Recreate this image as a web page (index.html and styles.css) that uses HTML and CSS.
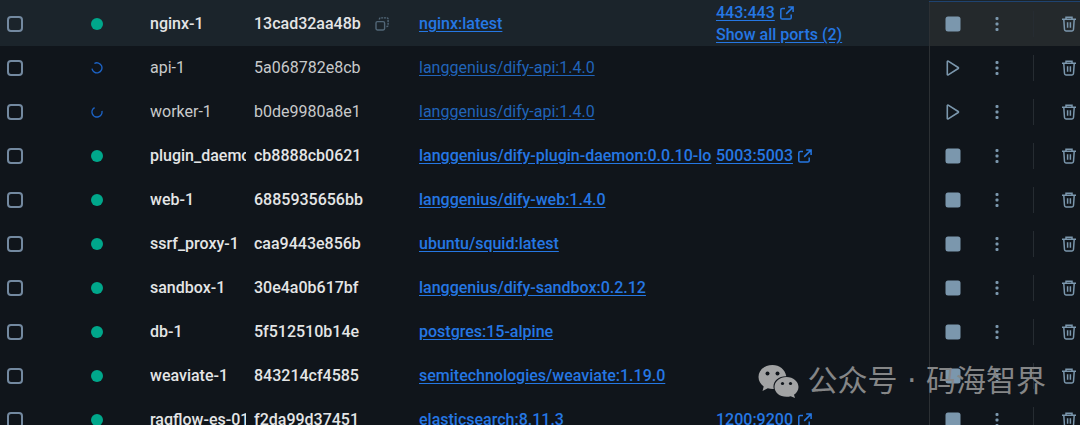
FILE: index.html
```html
<!DOCTYPE html>
<html lang="en">
<head>
    <meta charset="UTF-8">
    <title>Containers</title>
    <meta name="viewport" content="width=device-width, initial-scale=1">
    <link rel="stylesheet" href="styles.css">
</head>
<body>
<svg class="sprite" aria-hidden="true">
    <symbol id="icon-stop" viewBox="0 0 16 16">
        <rect x="0.5" y="0.5" width="15" height="15" rx="2.5" fill="currentColor"/>
    </symbol>
    <symbol id="icon-play" viewBox="0 0 16 16">
        <path d="M2.3 1.6v12.8a.6.6 0 0 0 .9.5l10-6.4a.6.6 0 0 0 0-1l-10-6.4a.6.6 0 0 0-.9.5z" fill="none" stroke="currentColor" stroke-width="1.6"/>
    </symbol>
    <symbol id="icon-more" viewBox="0 0 16 16">
        <rect x="6.5" y="1" width="3" height="3" rx="1" fill="currentColor"/>
        <rect x="6.5" y="6.5" width="3" height="3" rx="1" fill="currentColor"/>
        <rect x="6.5" y="12" width="3" height="3" rx="1" fill="currentColor"/>
    </symbol>
    <symbol id="icon-trash" viewBox="0 0 16 16">
        <path d="M1 3.2h14M5 3V1.2h6V3M2.800 3.500l.7 10a1.500 1.500 0 0 0 1.500 1.400h6a1.500 1.500 0 0 0 1.500-1.400l.7-10M6.600 6.300v5.400M9.400 6.300v5.400" fill="none" stroke="currentColor" stroke-width="1.5"/>
    </symbol>
    <symbol id="icon-open" viewBox="0 0 14 14">
        <path d="M5 2.5H2.2A1.4 1.4 0 0 0 .8 3.9v7.800a1.400 1.400 0 0 0 1.400 1.400h7.600a1.400 1.400 0 0 0 1.400-1.400V8.500M8.200 1h4.900v4.900M13 1.100L6.200 7.900" fill="none" stroke="currentColor" stroke-width="1.5"/>
    </symbol>
    <symbol id="icon-copy" viewBox="0 0 14 14">
        <rect x="1" y="4.6" width="8.6" height="8.4" rx="1.4" fill="none" stroke="currentColor" stroke-width="1.4"/>
        <path d="M4.4 2.6V2A1.2 1.2 0 0 1 5.6.9H12A1.2 1.2 0 0 1 13.1 2v6.2A1.2 1.2 0 0 1 12 9.5h-.6" fill="none" stroke="currentColor" stroke-width="1.4" stroke-dasharray="2 .8"/>
    </symbol>
    <symbol id="icon-loading" viewBox="0 0 12 12">
        <path d="M3.4 1.5A5 5 0 1 1 1 6.7" fill="none" stroke="currentColor" stroke-width="1.4"/>
    </symbol>
    <symbol id="icon-loading-alt" viewBox="0 0 12 12">
        <path d="M10.9 5A5 5 0 1 1 3.6 1.6" fill="none" stroke="currentColor" stroke-width="1.4"/>
    </symbol>
</svg>
<main class="container-list">
    <table>
        <colgroup>
            <col class="col-check">
            <col class="col-status">
            <col class="col-name">
            <col class="col-id">
            <col class="col-image">
            <col class="col-ports">
            <col class="col-actions">
        </colgroup>
        <tbody>
        <tr class="active">
            <td><input type="checkbox" aria-label="Select nginx-1"></td>
            <td><span class="dot"></span></td>
            <td><div class="name">nginx-1</div></td>
            <td><div class="id">13cad32aa48b <button class="copy" aria-label="Copy ID"><svg><use href="#icon-copy"/></svg></button></div></td>
            <td><a href="#">nginx:latest</a></td>
            <td class="ports"><a href="#">443:443</a><svg><use href="#icon-open"/></svg><br><a href="#">Show all ports (2)</a></td>
            <td class="actions"><div><button aria-label="Stop"><svg><use href="#icon-stop"/></svg></button><button aria-label="More"><svg><use href="#icon-more"/></svg></button><button class="delete" aria-label="Delete"><svg><use href="#icon-trash"/></svg></button></div></td>
        </tr>
        <tr class="starting">
            <td><input type="checkbox" aria-label="Select api-1"></td>
            <td><svg class="loading"><use href="#icon-loading"/></svg></td>
            <td><div class="name">api-1</div></td>
            <td><div class="id">5a068782e8cb</div></td>
            <td><a href="#">langgenius/dify-api:1.4.0</a></td>
            <td class="ports"></td>
            <td class="actions"><div><button aria-label="Start"><svg><use href="#icon-play"/></svg></button><button aria-label="More"><svg><use href="#icon-more"/></svg></button><button class="delete" aria-label="Delete"><svg><use href="#icon-trash"/></svg></button></div></td>
        </tr>
        <tr class="starting">
            <td><input type="checkbox" aria-label="Select worker-1"></td>
            <td><svg class="loading"><use href="#icon-loading-alt"/></svg></td>
            <td><div class="name">worker-1</div></td>
            <td><div class="id">b0de9980a8e1</div></td>
            <td><a href="#">langgenius/dify-api:1.4.0</a></td>
            <td class="ports"></td>
            <td class="actions"><div><button aria-label="Start"><svg><use href="#icon-play"/></svg></button><button aria-label="More"><svg><use href="#icon-more"/></svg></button><button class="delete" aria-label="Delete"><svg><use href="#icon-trash"/></svg></button></div></td>
        </tr>
        <tr>
            <td><input type="checkbox" aria-label="Select plugin_daemon"></td>
            <td><span class="dot"></span></td>
            <td><div class="name">plugin_daemo</div></td>
            <td><div class="id">cb8888cb0621</div></td>
            <td><a href="#">langgenius/dify-plugin-daemon:0.0.10-lo</a></td>
            <td class="ports"><a href="#">5003:5003</a><svg><use href="#icon-open"/></svg></td>
            <td class="actions"><div><button aria-label="Stop"><svg><use href="#icon-stop"/></svg></button><button aria-label="More"><svg><use href="#icon-more"/></svg></button><button class="delete" aria-label="Delete"><svg><use href="#icon-trash"/></svg></button></div></td>
        </tr>
        <tr>
            <td><input type="checkbox" aria-label="Select web-1"></td>
            <td><span class="dot"></span></td>
            <td><div class="name">web-1</div></td>
            <td><div class="id">6885935656bb</div></td>
            <td><a href="#">langgenius/dify-web:1.4.0</a></td>
            <td class="ports"></td>
            <td class="actions"><div><button aria-label="Stop"><svg><use href="#icon-stop"/></svg></button><button aria-label="More"><svg><use href="#icon-more"/></svg></button><button class="delete" aria-label="Delete"><svg><use href="#icon-trash"/></svg></button></div></td>
        </tr>
        <tr>
            <td><input type="checkbox" aria-label="Select ssrf_proxy-1"></td>
            <td><span class="dot"></span></td>
            <td><div class="name">ssrf_proxy-1</div></td>
            <td><div class="id">caa9443e856b</div></td>
            <td><a href="#">ubuntu/squid:latest</a></td>
            <td class="ports"></td>
            <td class="actions"><div><button aria-label="Stop"><svg><use href="#icon-stop"/></svg></button><button aria-label="More"><svg><use href="#icon-more"/></svg></button><button class="delete" aria-label="Delete"><svg><use href="#icon-trash"/></svg></button></div></td>
        </tr>
        <tr>
            <td><input type="checkbox" aria-label="Select sandbox-1"></td>
            <td><span class="dot"></span></td>
            <td><div class="name">sandbox-1</div></td>
            <td><div class="id">30e4a0b617bf</div></td>
            <td><a href="#">langgenius/dify-sandbox:0.2.12</a></td>
            <td class="ports"></td>
            <td class="actions"><div><button aria-label="Stop"><svg><use href="#icon-stop"/></svg></button><button aria-label="More"><svg><use href="#icon-more"/></svg></button><button class="delete" aria-label="Delete"><svg><use href="#icon-trash"/></svg></button></div></td>
        </tr>
        <tr>
            <td><input type="checkbox" aria-label="Select db-1"></td>
            <td><span class="dot"></span></td>
            <td><div class="name">db-1</div></td>
            <td><div class="id">5f512510b14e</div></td>
            <td><a href="#">postgres:15-alpine</a></td>
            <td class="ports"></td>
            <td class="actions"><div><button aria-label="Stop"><svg><use href="#icon-stop"/></svg></button><button aria-label="More"><svg><use href="#icon-more"/></svg></button><button class="delete" aria-label="Delete"><svg><use href="#icon-trash"/></svg></button></div></td>
        </tr>
        <tr>
            <td><input type="checkbox" aria-label="Select weaviate-1"></td>
            <td><span class="dot"></span></td>
            <td><div class="name">weaviate-1</div></td>
            <td><div class="id">843214cf4585</div></td>
            <td><a href="#">semitechnologies/weaviate:1.19.0</a></td>
            <td class="ports"></td>
            <td class="actions"><div><button aria-label="Stop"><svg><use href="#icon-stop"/></svg></button><button aria-label="More"><svg><use href="#icon-more"/></svg></button><button class="delete" aria-label="Delete"><svg><use href="#icon-trash"/></svg></button></div></td>
        </tr>
        <tr>
            <td><input type="checkbox" aria-label="Select ragflow-es-01"></td>
            <td><span class="dot"></span></td>
            <td><div class="name">ragflow-es-01</div></td>
            <td><div class="id">f2da99d37451</div></td>
            <td><a href="#">elasticsearch:8.11.3</a></td>
            <td class="ports"><a href="#">1200:9200</a><svg><use href="#icon-open"/></svg></td>
            <td class="actions"><div><button aria-label="Stop"><svg><use href="#icon-stop"/></svg></button><button aria-label="More"><svg><use href="#icon-more"/></svg></button><button class="delete" aria-label="Delete"><svg><use href="#icon-trash"/></svg></button></div></td>
        </tr>
        </tbody>
    </table>
</main>
<div class="watermark" lang="zh">
    <svg viewBox="0 0 41 33" aria-hidden="true">
        <path d="M14.5 0C6.5 0 .5 5.2.5 12c0 3.9 2 7.2 5.2 9.5L4.5 26l5.3-2.7c1.9.6 4 .8 6 .7C14 17 20 11 28.3 11.2 27 4.5 21.5 0 14.5 0z" fill="currentColor"/>
        <path d="M28.5 12C21.7 12 16.5 16.5 16.5 22s5.2 9.8 12 9.8c1.5 0 2.9-.2 4.2-.6l4.3 1.8-1-3.3c2.8-1.9 4.5-4.6 4.5-7.700 0-5.500-5.200-10-12-10z" fill="currentColor"/>
        <g fill="#10151b">
            <circle cx="9.5" cy="8.5" r="2"/><circle cx="19.5" cy="8.5" r="2"/>
            <circle cx="24.5" cy="18.5" r="1.6"/><circle cx="32.5" cy="18.5" r="1.6"/>
        </g>
    </svg>
    <span>公众号 · 码海智界</span>
</div>
</body>
</html>
```

FILE: styles.css
```css
body {
    margin: 0;
    height: 100vh;
    overflow: hidden;
    position: relative;
    background-color: #10151b;
    color: #e4e5e6;
    font-family: Roboto, sans-serif;
    font-size: 16px;
    font-weight: 500;
    line-height: 22px;
}
.sprite {
    position: absolute;
    width: 0;
    height: 0;
}
.container-list {
    border-top: 2px solid #1b242b;
}
table {
    width: 100%;
    table-layout: fixed;
    border-collapse: collapse;
}
.col-check {
    width: 91px;
}
.col-status {
    width: 59px;
}
.col-name {
    width: 104px;
}
.col-id {
    width: 165px;
}
.col-ports {
    width: 213px;
}
.col-actions {
    width: 151px;
}
td {
    height: 44px;
    padding: 0;
    white-space: nowrap;
}
.active {
    background-color: #1b242b;
}
.starting {
    font-weight: 400;
}
.starting .name,
.starting .id {
    color: #c8cacb;
}
input[type="checkbox"] {
    appearance: none;
    display: block;
    box-sizing: border-box;
    width: 16px;
    height: 16px;
    margin: 0 0 0 7px;
    border: 2px solid #7389a0;
    border-radius: 4px;
}
.dot {
    display: block;
    width: 12px;
    height: 12px;
    border-radius: 50%;
    background-color: #00a78b;
}
.loading {
    display: block;
    width: 12px;
    height: 12px;
    color: #1c62c4;
}
.name {
    overflow: hidden;
    margin-right: 8px;
}
.id {
    display: flex;
    align-items: center;
    gap: 14px;
}
a {
    color: #2577e3;
    text-underline-offset: 2px;
}
.starting a {
    color: #2164b9;
}
.ports svg {
    width: 14px;
    height: 14px;
    margin-left: 5px;
    vertical-align: -2px;
    color: #2577e3;
}
button {
    display: flex;
    padding: 0;
    border: none;
    background: none;
    color: #7b97ad;
    cursor: pointer;
}
.copy {
    color: #526778;
}
.copy svg {
    width: 14px;
    height: 14px;
}
.actions {
    border-left: 1px solid #2c3034;
}
.active .actions {
    background-color: #24292c;
    box-shadow: 0 -1px #1f4370;
}
.actions div {
    display: flex;
    align-items: center;
    gap: 28px;
    padding-left: 15px;
}
.actions svg {
    width: 16px;
    height: 16px;
}
.delete {
    padding: 5px 0 5px 27px;
    border-left: 1px solid #262c32;
}
.watermark {
    position: absolute;
    right: 34px;
    bottom: 22px;
    display: flex;
    align-items: center;
    gap: 8px;
    color: #a2a3a4;
    font-family: "DejaVu Sans", "Noto Sans CJK SC", sans-serif;
    font-size: 30px;
    font-weight: 400;
    line-height: 44px;
}
.watermark svg {
    width: 41px;
    height: 33px;
}
.watermark span {
    color: #858687;
}
```
